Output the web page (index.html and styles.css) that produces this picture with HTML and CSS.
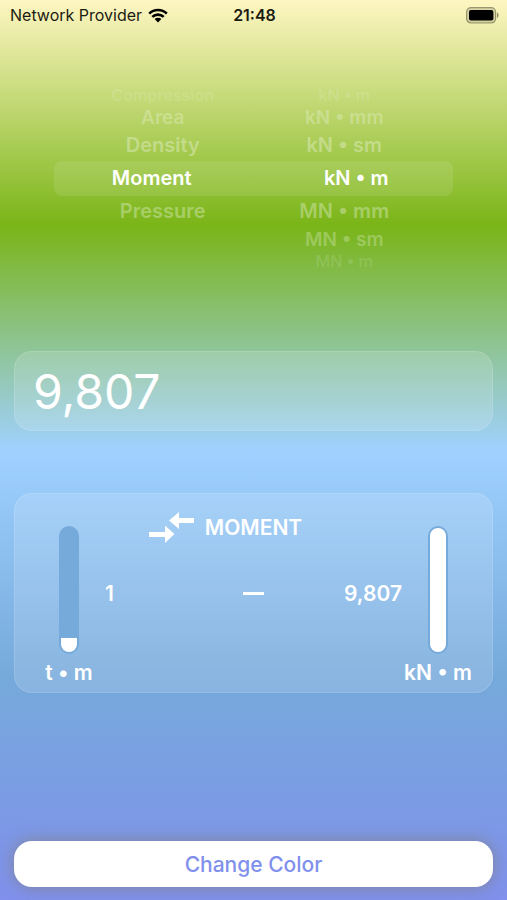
FILE: index.html
```html
<!DOCTYPE html>
<html lang="en">
<head>
<meta charset="utf-8">
<meta name="viewport" content="width=device-width, initial-scale=1">
<title>Unit Converter</title>
<link rel="stylesheet" href="styles.css">
</head>
<body>
<header class="status">
  <div class="carrier">
    <span>Network Provider</span>
    <svg class="wifi" viewBox="0 0 20 15" aria-hidden="true">
      <path d="M1.2 5.6A12.6 12.6 0 0 1 18.8 5.6M4.3 8.9A8.2 8.2 0 0 1 15.7 8.9" fill="none" stroke="#000" stroke-width="2.6"/>
      <path d="M6.6 11.1A4.8 4.8 0 0 1 13.4 11.1L10 14.6Z"/>
    </svg>
  </div>
  <time class="clock">21:48</time>
  <svg class="battery" viewBox="0 0 33 17" aria-hidden="true">
    <rect x="0.6" y="0.6" width="29" height="15.4" rx="4.4" fill="#000" fill-opacity=".12" stroke="#000" stroke-opacity=".35" stroke-width="1.2"/>
    <rect x="3" y="3" width="24.400" height="10.600" rx="2"/>
    <path d="M31 5.600v5.400c2-.9 2-4.500 0-5.400z" fill-opacity=".45"/>
  </svg>
</header>
<main class="app">
  <section class="picker" aria-label="Quantity and unit">
    <ul class="wheel" role="listbox" aria-label="Quantity">
      <li class="edge" role="option">Compression</li>
      <li class="far" role="option">Area</li>
      <li class="near" role="option">Density</li>
      <li class="selected" role="option" aria-selected="true">Moment</li>
      <li class="near" role="option">Pressure</li>
    </ul>
    <ul class="wheel" role="listbox" aria-label="Unit">
      <li class="edge" role="option">kN • m</li>
      <li class="far" role="option">kN • mm</li>
      <li class="near" role="option">kN • sm</li>
      <li class="selected" role="option" aria-selected="true">kN • m</li>
      <li class="near" role="option">MN • mm</li>
      <li class="far" role="option">MN • sm</li>
      <li class="edge" role="option">MN • m</li>
    </ul>
  </section>
  <input class="glass amount" type="text" inputmode="decimal" value="9,807" aria-label="Value">
  <section class="glass result">
    <div class="side">
      <div class="track" role="meter" aria-label="t • m" aria-valuemin="0" aria-valuemax="100" aria-valuenow="11"><div class="fill" style="height:11%"></div></div>
      <span>t • m</span>
    </div>
    <div class="middle">
      <h2 class="title">
        <svg class="arrows" viewBox="0 0 45 31" aria-hidden="true"><path d="M45 6v5H30v6L20 8.500 30 0v6zM0 20v5h16v6L25.500 22 16 13.500V20z"/></svg>
        MOMENT
      </h2>
      <div class="values">
        <span>1</span>
        <svg class="dash" viewBox="0 0 21 3" aria-hidden="true"><path d="M0 0h21v3H0z"/></svg>
        <span>9,807</span>
      </div>
    </div>
    <div class="side">
      <div class="track" role="meter" aria-label="kN • m" aria-valuemin="0" aria-valuemax="100" aria-valuenow="100"><div class="fill" style="height:100%"></div></div>
      <span>kN • m</span>
    </div>
  </section>
  <button class="change" type="button">Change Color</button>
</main>
</body>
</html>
```
FILE: styles.css
```css
* {
  box-sizing: border-box;
}

body {
  margin: 0;
  min-height: 100vh;
  display: flex;
  flex-direction: column;
  background: linear-gradient(#fef6c2, #7ab518 25%, #a0d1ff 50%, #76aadb 75%, #8090ec);
  color: #fff;
  font-family: Inter, "Liberation Sans", sans-serif;
  font-size: 20px;
  font-weight: 600;
}

.status {
  display: grid;
  grid-template-columns: 1fr auto 1fr;
  align-items: center;
  height: 30px;
  padding: 0 8px 0 10px;
  color: #1c1c12;
  font-size: 16px;
  font-weight: 400;
}

.carrier {
  display: flex;
  align-items: center;
  gap: 6px;
  white-space: nowrap;
}

.wifi {
  width: 20px;
  height: 15px;
}

.clock {
  font-weight: 600;
}

.battery {
  width: 33px;
  height: 17px;
  justify-self: end;
}

.app {
  flex: 1;
  display: flex;
  flex-direction: column;
  padding: 56px 14px;
  padding-bottom: 13px;
}

.picker {
  position: relative;
  display: grid;
  grid-template-columns: 1fr 1fr;
  gap: 8px;
  height: 185px;
  margin: 0 40px;
}

.picker::before {
  content: "";
  position: absolute;
  inset: 75px 0 auto;
  height: 35px;
  border-radius: 8px;
  background: rgba(255, 255, 255, 0.1);
}

.wheel {
  position: relative;
  margin: 0;
  padding: 0;
  list-style: none;
  text-align: center;
}

.wheel:first-child {
  padding-left: 22px;
}

.wheel:last-child {
  padding-right: 22px;
}

.wheel li {
  height: 31px;
  line-height: 31px;
  white-space: nowrap;
}

.wheel .near {
  color: rgba(255, 255, 255, 0.33);
}

.wheel .far {
  height: 25px;
  line-height: 25px;
  font-size: 19px;
  color: rgba(255, 255, 255, 0.26);
}

.wheel .edge {
  height: 19px;
  line-height: 19px;
  font-size: 16px;
  color: rgba(255, 255, 255, 0.12);
}

.wheel .selected {
  height: 35px;
  line-height: 35px;
  padding-right: 22px;
}

.wheel:last-child .selected {
  padding: 0 0 0 24px;
}

.glass {
  border: 1px solid rgba(255, 255, 255, 0.12);
  border-radius: 18px;
  background: rgba(255, 255, 255, 0.14);
}

.amount {
  width: 100%;
  height: 80px;
  margin-top: 80px;
  padding: 0 18px;
  color: #fff;
  font: 400 48px Inter, "Liberation Sans", sans-serif;
  outline: 0;
}

.result {
  display: flex;
  height: 200px;
  margin-top: 62px;
  padding: 32px 18px 6px;
  font-size: 21px;
}

.side {
  flex: 0 0 72px;
  display: flex;
  flex-direction: column;
  align-items: center;
  gap: 6px;
  line-height: 26px;
  white-space: nowrap;
}

.track {
  display: flex;
  align-items: flex-end;
  width: 20px;
  height: 128px;
  padding: 2px;
  border-radius: 10px;
  background: #76aadb;
  overflow: hidden;
}

.fill {
  width: 100%;
  border-radius: 0 0 8px 8px;
  background: #fff;
}

.side:last-child .fill {
  border-radius: 8px;
}

.middle {
  flex: 1;
}

.title {
  display: flex;
  align-items: center;
  justify-content: center;
  gap: 11px;
  height: 32px;
  margin: -15px 56px 0 0;
  font-size: 21px;
  font-weight: 600;
}

.arrows {
  width: 45px;
  height: 31px;
  fill: #fff;
}

.values {
  display: grid;
  grid-template-columns: 1fr auto 1fr;
  align-items: center;
  height: 100px;
}

.values span:last-child {
  text-align: right;
}

.dash {
  width: 21px;
  height: 3px;
  fill: #fff;
}

.change {
  height: 46px;
  margin-top: auto;
  border: 0;
  border-radius: 18px;
  background: #fff;
  box-shadow: 0 0 16px rgba(128, 128, 128, 0.8);
  color: #8090ec;
  font: 500 21px Inter, "Liberation Sans", sans-serif;
}
```
